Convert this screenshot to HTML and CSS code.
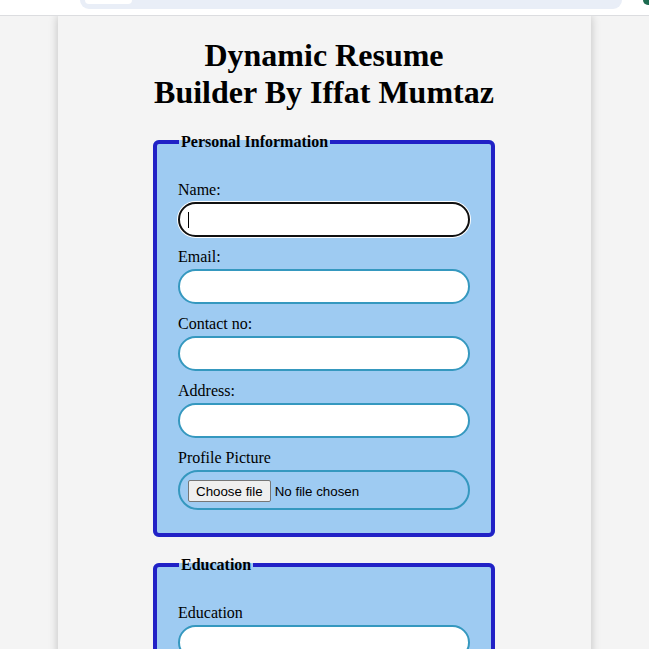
FILE: index.html
```html
<!DOCTYPE html>
<html lang="en">
<head>
<meta charset="utf-8">
<title>Dynamic Resume Builder</title>
<link rel="stylesheet" href="styles.css">
</head>
<body>
<div class="chrome">
  <div class="chrome-bar"><div class="chrome-tab"></div></div>
  <div class="chrome-icon"></div>
</div>
<div class="container">
  <div class="content">
    <h1 class="title">Dynamic Resume<br>Builder By Iffat Mumtaz</h1>
    <form class="form">
      <fieldset class="section">
        <legend class="legend">Personal Information</legend>
        <label class="label">Name:</label>
        <div class="field focused"><span class="caret"></span></div>
        <label class="label">Email:</label>
        <div class="field"></div>
        <label class="label">Contact no:</label>
        <div class="field"></div>
        <label class="label">Address:</label>
        <div class="field"></div>
        <label class="label">Profile Picture</label>
        <div class="file-field">
          <span class="file-btn">Choose file</span>
          <span class="file-text">No file chosen</span>
        </div>
      </fieldset>
      <fieldset class="section second">
        <legend class="legend">Education</legend>
        <label class="label">Education</label>
        <div class="field"></div>
        <label class="label">Institute</label>
        <div class="field"></div>
      </fieldset>
    </form>
  </div>
</div>
</body>
</html>
```
FILE: styles.css
```css
html, body {
  margin: 0;
  padding: 0;
}
body {
  background: #f4f4f4;
  font-family: "Liberation Serif", "Times New Roman", serif;
  color: #000;
}
.chrome {
  position: relative;
  z-index: 1;
  height: 15px;
  background: #ffffff;
  border-bottom: 1px solid #dcdde0;
  display: flex;
  align-items: flex-start;
}
.chrome-bar {
  margin-left: 80px;
  width: 542px;
  height: 9px;
  background: #e9eef7;
  border-radius: 0 0 11px 11px;
  display: flex;
}
.chrome-tab {
  margin-left: 5px;
  width: 47px;
  height: 4px;
  background: #ffffff;
  border-radius: 0 0 5px 5px;
}
.chrome-icon {
  margin-left: auto;
  width: 6px;
  height: 5px;
  background: #1d6b50;
  border-radius: 0 0 0 5px;
}
.container {
  width: 533px;
  margin: 0 auto;
  background: #f4f4f4;
  box-shadow: 0 0 9px rgba(0, 0, 0, 0.22);
  padding-top: 21px;
  min-height: 800px;
}
.content {
  width: 342px;
  margin: 0 0 0 95px;
}
.title {
  margin: 0 0 22px;
  font-size: 32px;
  line-height: 37px;
  font-weight: bold;
  text-align: center;
}
.form {
  margin: 0;
}
.section {
  margin: 0;
  border: 4px solid #2121c6;
  border-radius: 6px;
  background: #9ecbf2;
  padding: 30px 21px 23px;
  min-width: 0;
}
.section.second {
  margin-top: 19px;
}
.legend {
  margin-left: 1px;
  padding: 0 2px;
  font-size: 16px;
  font-weight: bold;
}
.label {
  display: block;
  font-size: 16px;
  line-height: 18px;
  margin-bottom: 3px;
}
.field {
  box-sizing: border-box;
  height: 35px;
  background: #ffffff;
  border: 2px solid #3598bf;
  border-radius: 18px;
  margin-bottom: 11px;
  padding: 0 8px;
  display: flex;
  align-items: center;
}
.field.focused {
  border-color: #101010;
  box-shadow: 0 0 0 1px #ffffff;
}
.caret {
  display: inline-block;
  width: 1px;
  height: 16px;
  background: #000;
}
.file-field {
  box-sizing: border-box;
  height: 40px;
  border: 2px solid #3598bf;
  border-radius: 20px;
  padding: 2px 8px 0;
  display: flex;
  align-items: center;
  font-family: "Liberation Sans", Arial, sans-serif;
  font-size: 13.33px;
}
.file-btn {
  box-sizing: border-box;
  height: 22px;
  padding: 0 7px;
  display: flex;
  align-items: center;
  background: #efefef;
  border: 1px solid #767676;
  border-radius: 2px;
  color: #000;
}
.file-text {
  margin-left: 4px;
}
```
